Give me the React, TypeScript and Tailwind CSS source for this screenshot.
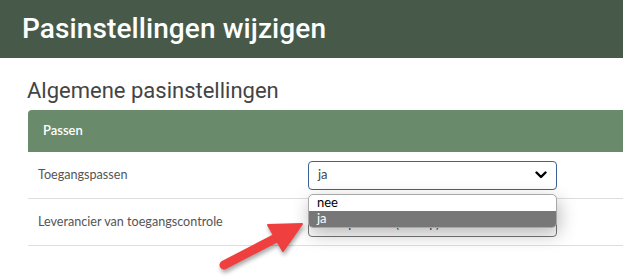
import React from 'react';

const rowLabel = "text-[12.6px] text-[#555] font-['Lato',sans-serif]";

const Chevron = () => (
  <svg width="12" height="8" viewBox="0 0 12 8" className="text-black">
    <path d="M1.5 1.5 L6 6 L10.5 1.5" fill="none" stroke="currentColor" strokeWidth="2.4" strokeLinecap="round" strokeLinejoin="round" />
  </svg>
);

const PointerArrow = () => (
  <svg
    className="absolute left-0 top-0 pointer-events-none drop-shadow-[1px_3px_2px_rgba(0,0,0,0.35)]"
    width="623"
    height="280"
    viewBox="0 0 623 280"
  >
    <line x1="224" y1="265" x2="276" y2="238" stroke="#ef3f3f" strokeWidth="9" strokeLinecap="round" />
    <polygon points="302,224 268,225 283,251" fill="#ef3f3f" stroke="#ef3f3f" strokeWidth="2" strokeLinejoin="round" />
  </svg>
);

export default function App() {
  return (
    <div className="relative w-[623px] h-[280px] overflow-hidden bg-white">
      {/* Page title bar */}
      <div className="h-[58px] bg-[#475a4a] flex items-center pl-[22px]">
        <h1 className="text-white text-[28px] font-medium tracking-[0.1px] font-['Roboto',sans-serif]">
          Pasinstellingen wijzigen
        </h1>
      </div>

      <div className="pl-[28px]">
        <h2 className="pt-[16px] h-[52px] text-[22px] text-[#444] font-['Roboto',sans-serif] -ml-[1px]">
          Algemene pasinstellingen
        </h2>

        {/* Settings table */}
        <div className="w-[640px]">
          <div className="h-[42px] bg-[#698a6b] rounded-tl-[4px] flex items-center pl-[15px]">
            <span className="text-white text-[13px] font-semibold font-['Lato',sans-serif]">Passen</span>
          </div>

          <div className="h-[47px] flex items-center border-b border-[#dedede]">
            <div className={`w-[280px] pl-[10px] ${rowLabel}`}>Toegangspassen</div>
            <div className="w-[249px] h-[29px] rounded-[4px] border border-[#3b6494] flex items-center justify-between pl-[9px] pr-[9px]">
              <span className="text-[13px] text-[#444] font-['Lato',sans-serif]">ja</span>
              <Chevron />
            </div>
          </div>

          <div className="h-[47px] flex items-center border-b border-[#dedede]">
            <div className={`w-[280px] pl-[10px] ${rowLabel}`}>Leverancier van toegangscontrole</div>
            <div className="relative w-[249px] h-[29px] rounded-[4px] border border-[#777] flex items-end pl-[9px] pb-[6px]">
              <span className="text-[13px] leading-[13px] text-[#444] font-['Lato',sans-serif]">Nedap AEOS (Nedap)</span>
            </div>
          </div>
        </div>
      </div>

      {/* Open native dropdown list */}
      <div className="absolute left-[308px] top-[194px] w-[249px] rounded-[5px] border border-[#a8a8a8] bg-white overflow-hidden shadow-[2px_6px_18px_rgba(0,0,0,0.28)]">
        <div className="h-[16px] flex items-center pl-[8px] text-[13px] text-black font-['Lato',sans-serif]">nee</div>
        <div className="h-[16px] flex items-center pl-[8px] bg-[#777] text-[13px] text-white font-['Lato',sans-serif]">ja</div>
      </div>

      <PointerArrow />
    </div>
  );
}
